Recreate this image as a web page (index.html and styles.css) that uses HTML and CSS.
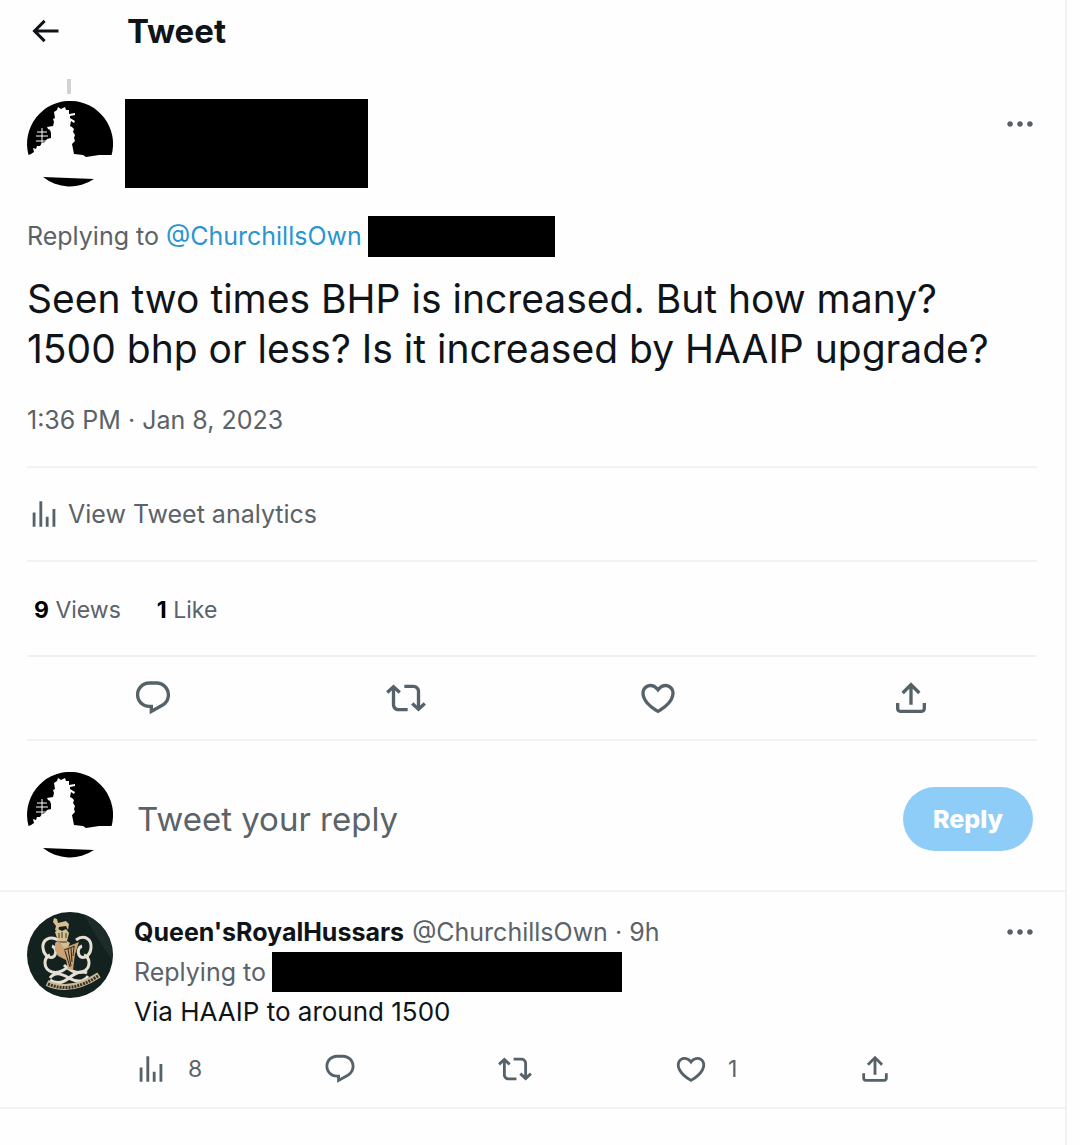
FILE: index.html
```html
<!DOCTYPE html>
<html lang="en">
<head>
    <meta charset="UTF-8">
    <meta name="viewport" content="width=device-width, initial-scale=1.0">
    <title>Tweet</title>
    <link rel="stylesheet" href="styles.css">
</head>
<body>

    <!-- shared icons -->
    <svg class="sprite" aria-hidden="true">
        <symbol id="icon-back" viewBox="0 0 24 24"><path d="M7.414 13l5.043 5.04-1.414 1.42L3.586 12l7.457-7.46 1.414 1.42L7.414 11H21v2H7.414z"/></symbol>
        <symbol id="icon-more" viewBox="0 0 24 24"><path d="M3 12c0-1.1.9-2 2-2s2 .9 2 2-.9 2-2 2-2-.9-2-2zm9 2c1.1 0 2-.9 2-2s-.9-2-2-2-2 .9-2 2 .9 2 2 2zm7 0c1.1 0 2-.9 2-2s-.9-2-2-2-2 .9-2 2 .9 2 2 2z"/></symbol>
        <symbol id="icon-stats" viewBox="0 0 24 24"><path d="M8.75 21V3h2v18h-2zM18 21V8.5h2V21h-2zM4 21l.004-10h2L6 21H4zm9.248 0v-7h2v7h-2z"/></symbol>
        <symbol id="icon-reply" viewBox="0 0 24 24"><path d="M1.751 10c0-4.42 3.584-8 8.005-8h4.366c4.49 0 8.129 3.64 8.129 8.13 0 2.96-1.607 5.68-4.196 7.11l-8.054 4.46v-3.69h-.067c-4.49.1-8.183-3.51-8.183-8.01zm8.005-6c-3.317 0-6.005 2.69-6.005 6 0 3.37 2.77 6.08 6.138 6.01l.351-.01h1.761v2.3l5.087-2.81c1.951-1.08 3.163-3.13 3.163-5.36 0-3.39-2.744-6.13-6.129-6.13H9.756z"/></symbol>
        <symbol id="icon-retweet" viewBox="0 0 24 24"><path d="M4.5 3.88l4.432 4.14-1.364 1.46L5.5 7.55V16c0 1.1.896 2 2 2H13v2H7.5c-2.209 0-4-1.79-4-4V7.55L1.432 9.48.068 8.02 4.5 3.88zM16.5 6H11V4h5.5c2.209 0 4 1.79 4 4v8.45l2.068-1.93 1.364 1.46-4.432 4.14-4.432-4.14 1.364-1.46 2.068 1.93V8c0-1.1-.896-2-2-2z"/></symbol>
        <symbol id="icon-like" viewBox="0 0 24 24"><path d="M16.697 5.5c-1.222-.06-2.679.51-3.89 2.16l-.805 1.09-.806-1.09C9.984 6.01 8.526 5.44 7.304 5.5c-1.243.07-2.349.78-2.91 1.91-.552 1.12-.633 2.78.479 4.82 1.074 1.97 3.257 4.27 7.129 6.61 3.87-2.34 6.052-4.64 7.126-6.61 1.111-2.04 1.03-3.7.477-4.82-.561-1.13-1.666-1.84-2.908-1.91zm4.187 7.69c-1.351 2.48-4.001 5.12-8.379 7.67l-.503.3-.504-.3c-4.379-2.55-7.029-5.19-8.382-7.67-1.36-2.5-1.41-4.86-.514-6.67.887-1.79 2.647-2.91 4.601-3.01 1.651-.09 3.368.56 4.798 2.01 1.429-1.45 3.146-2.1 4.796-2.01 1.954.1 3.714 1.22 4.601 3.01.896 1.81.846 4.17-.514 6.67z"/></symbol>
        <symbol id="icon-share" viewBox="0 0 24 24"><path d="M12 2.59l5.7 5.7-1.41 1.42L13 6.41V16h-2V6.41l-3.3 3.3-1.41-1.42L12 2.59zM21 15l-.02 3.51c0 1.38-1.12 2.49-2.5 2.49H5.5C4.11 21 3 19.88 3 18.5V15h2v3.5c0 .28.22.5.5.5h12.98c.28 0 .5-.22.5-.5L19 15h2z"/></symbol>
        <symbol id="avatar-ship" viewBox="0 0 86 86">
            <!-- sky around the ship, then the water below the hull -->
            <path d="M1.5 54A43 43 0 1 1 84.6 54L72 54 59 56 56 54 47 53 46 48 45 43 48 40 47 37 48 34 46 31 47 28 45 26 43 25 44 20 47 22 48 20 43 17 43 15 48 14 48 12 42 13 42 9 39 9 38 6 34 8 31 6 30 9 27 11 28 17 26 18 27 21 26 25 20 26 21 28 23 29 24 32 24 37 20 38 18 41 15 42 13 45 10 45 9 48 6 47 7 51 4 53z"/>
            <path d="M16 76A43 43 0 0 0 67 78z"/>
            <path stroke="#fff" fill="none" d="M10 31h10M9 35h12M9 40h11M15 27v18"/>
        </symbol>
    </svg>

    <main class="column">
        <header class="top-bar">
            <button class="icon-button" aria-label="Back"><svg class="icon-back"><use href="#icon-back"/></svg></button>
            <h1>Tweet</h1>
        </header>

        <article class="tweet">
            <div class="thread-line"></div>
            <div class="author">
                <svg class="avatar" role="img" aria-label="Profile picture"><use href="#avatar-ship"/></svg>
                <div class="redacted redacted-author"></div>
                <button class="icon-button more" aria-label="More"><svg class="icon"><use href="#icon-more"/></svg></button>
            </div>
            <div class="replying-to">
                <span>Replying to <a href="#">@ChurchillsOwn</a></span>
                <div class="redacted redacted-handle"></div>
            </div>
            <p class="tweet-text">Seen two times BHP is increased. But how many?<br>1500 bhp or less? Is it increased by HAAIP upgrade?</p>
            <time class="date" datetime="2023-01-08T13:36">1:36 PM · Jan 8, 2023</time>
            <a class="analytics" href="#"><svg class="icon"><use href="#icon-stats"/></svg>View Tweet analytics</a>
            <div class="stats">
                <span><strong>9</strong> Views</span>
                <span><strong>1</strong> Like</span>
            </div>
            <div class="actions">
                <button class="icon-button" aria-label="Reply"><svg class="icon-large"><use href="#icon-reply"/></svg></button>
                <button class="icon-button" aria-label="Retweet"><svg class="icon-large"><use href="#icon-retweet"/></svg></button>
                <button class="icon-button" aria-label="Like"><svg class="icon-large"><use href="#icon-like"/></svg></button>
                <button class="icon-button" aria-label="Share"><svg class="icon-large"><use href="#icon-share"/></svg></button>
            </div>
        </article>

        <form class="composer">
            <svg class="avatar" role="img" aria-label="Profile picture"><use href="#avatar-ship"/></svg>
            <input type="text" aria-label="Tweet your reply" placeholder="Tweet your reply">
            <button class="reply-button" type="button">Reply</button>
        </form>

        <article class="comment">
            <svg class="avatar" viewBox="0 0 86 86" role="img" aria-label="Queen'sRoyalHussars">
                <circle cx="43" cy="43" r="43" fill="#13211f"/>
                <path d="M56 2q14 24 29 46A43 43 0 0 0 56 2z" fill="#1d2c2b"/>
                <!-- looped cypher -->
                <g fill="none" stroke="#e6e0d4" stroke-width="3">
                    <path d="M31 28c-8-5-16 0-15 8 1 9 9 12 12 7 2-4 0-8-3-9M49 28c8-6 16-1 15 8-1 9-9 12-12 7-2-4 0-8 3-9"/>
                    <path d="M23 43c-7 3-7 14 2 17 8 2 14-3 18-7M57 43c7 3 7 14-2 17-8 2-14-3-18-7"/>
                    <path d="M23 66c5-7 12-4 19 0s14 5 19-2M60 61c-6-3-12 0-18 5s-13 6-19 2"/>
                </g>
                <!-- lion and crown -->
                <path fill="#d8bf91" d="M27 6l3 1 1 4 8-2 3 3-1 6-2-4-7 1-1 4-3-1 1-4-3-4zM28 20l3-3 4 2 4-2 3 4-2 8 3 2-3 6H31l-3-6 3-2z"/>
                <path stroke="#33332a" fill="none" d="M32 21v5M35 20v6M39 21v5M31 30h9"/>
                <!-- harp -->
                <path fill="#c9a276" d="M28 32l5-2 4 6 15-6-4 12-2 16-5-1-2-9-8-4-3-6z"/>
                <path stroke="#2d2920" fill="none" d="M37 38l11-4M38 39l5 16M41 37l3 17M44 36l1 14M47 35l-1 9"/>
                <!-- scroll -->
                <path fill="none" stroke="#cbb994" stroke-width="6" d="M20 71q23 11 52-8"/>
                <path fill="none" stroke="#34342b" stroke-width="3" stroke-dasharray="2 1" d="M21 72q23 10 50-8"/>
            </svg>
            <div class="comment-body">
                <div class="comment-head">
                    <strong>Queen'sRoyalHussars</strong>
                    <span>@ChurchillsOwn · 9h</span>
                    <button class="icon-button more" aria-label="More"><svg class="icon"><use href="#icon-more"/></svg></button>
                </div>
                <div class="replying-to">
                    <span>Replying to</span>
                    <div class="redacted redacted-names"></div>
                </div>
                <p class="comment-text">Via HAAIP to around 1500</p>
                <div class="comment-actions">
                    <button class="icon-button" aria-label="8 views"><svg class="icon"><use href="#icon-stats"/></svg><span class="count">8</span></button>
                    <button class="icon-button" aria-label="Reply"><svg class="icon"><use href="#icon-reply"/></svg></button>
                    <button class="icon-button" aria-label="Retweet"><svg class="icon"><use href="#icon-retweet"/></svg></button>
                    <button class="icon-button" aria-label="1 like"><svg class="icon"><use href="#icon-like"/></svg><span class="count">1</span></button>
                    <button class="icon-button" aria-label="Share"><svg class="icon"><use href="#icon-share"/></svg></button>
                </div>
            </div>
        </article>
    </main>

</body>
</html>
```
FILE: styles.css
```css
* {
    box-sizing: border-box;
}

body {
    margin: 0;
    font-family: Inter, "Liberation Sans", sans-serif;
    font-size: 25px;
    line-height: 40px;
    color: #0f1419;
    background-color: #fefefe;
}

h1, p {
    margin: 0;
}

a {
    color: #2b95d0;
    text-decoration: none;
}

.sprite {
    display: none;
}

.column {
    min-height: 100vh;
    margin-right: 13px;
    border-right: 2px solid #eff1f2;
}

.icon-button {
    display: flex;
    align-items: center;
    padding: 0;
    border: none;
    background: none;
    font: inherit;
    color: #5b6268;
    cursor: pointer;
}

.icon, .icon-large, .icon-back {
    display: block;
    flex: none;
    width: 34px;
    height: 34px;
    fill: #56626a;
}

.icon-large {
    width: 40px;
    height: 40px;
}

.icon-back {
    width: 36px;
    height: 36px;
    fill: #0f1419;
}

.avatar {
    flex: none;
    width: 86px;
    height: 86px;
}

.redacted {
    background-color: #000;
}

/* Header */
.top-bar {
    display: flex;
    align-items: center;
    gap: 64px;
    height: 62px;
    padding: 0 27px;
}

h1 {
    font-size: 33px;
    font-weight: 700;
}

/* Main tweet */
.tweet {
    padding: 17px 28px 0 27px;
}

.thread-line {
    width: 4px;
    height: 15px;
    margin: 0 0 5px 40px;
    background-color: #cfd3d5;
}

.author {
    display: flex;
    align-items: center;
    gap: 12px;
}

.redacted-author {
    width: 243px;
    height: 89px;
}

.more {
    margin-left: auto;
}

.author .more {
    align-self: flex-start;
    padding-top: 8px;
}

.replying-to {
    display: flex;
    gap: 6px;
    color: #5b6268;
}

.tweet .replying-to {
    margin-top: 28px;
}

.redacted-handle {
    width: 187px;
    height: 41px;
}

.tweet-text {
    margin-top: 17px;
    font-size: 39px;
    line-height: 50px;
}

.date {
    display: block;
    padding: 26px 0;
    color: #5b6268;
}

.analytics, .stats, .actions {
    display: flex;
    align-items: center;
    border-top: 2px solid #f0f2f3;
    color: #5b6268;
}

.analytics {
    gap: 7px;
    padding: 26px 0;
}

.stats {
    gap: 36px;
    padding: 28px 7px 25px;
    font-size: 23px;
}

.stats strong {
    color: #000;
}

.actions {
    padding: 21px 0;
    border-bottom: 2px solid #f0f2f3;
}

.actions .icon-button {
    flex: 1;
    justify-content: center;
}

/* Reply box */
.composer {
    display: flex;
    align-items: center;
    padding: 31px 32px 24px 27px;
    border-bottom: 2px solid #f0f2f3;
}

.composer .avatar {
    align-self: flex-start;
}

.composer input {
    flex: 1;
    min-width: 0;
    height: 94px;
    padding: 0 24px;
    border: none;
    outline: none;
    background: none;
    font: inherit;
    font-size: 33px;
}

.composer input::placeholder {
    color: #5b6268;
    opacity: 1;
}

.reply-button {
    width: 130px;
    height: 64px;
    border: none;
    border-radius: 32px;
    background-color: #8ecdf8;
    color: #fff;
    font: inherit;
    font-weight: 800;
    cursor: pointer;
}

/* Comment */
.comment {
    display: flex;
    gap: 21px;
    padding: 20px 28px 21px 27px;
    border-bottom: 2px solid #f0f2f3;
}

.comment-body {
    flex: 1;
}

.comment-head {
    display: flex;
    align-items: center;
    gap: 8px;
    color: #5b6268;
}

.comment-head strong {
    color: #0f1419;
}

.redacted-names {
    width: 350px;
    height: 40px;
}

.comment-text {
    font-size: 26px;
}

.comment-actions {
    display: flex;
    justify-content: space-between;
    margin-top: 20px;
    padding-right: 145px;
}

.comment-actions .icon-button {
    min-width: 55px;
    line-height: 34px;
}

.comment-actions .icon-button:last-child {
    min-width: 34px;
}

.count {
    padding-left: 20px;
    font-size: 23px;
}
```
